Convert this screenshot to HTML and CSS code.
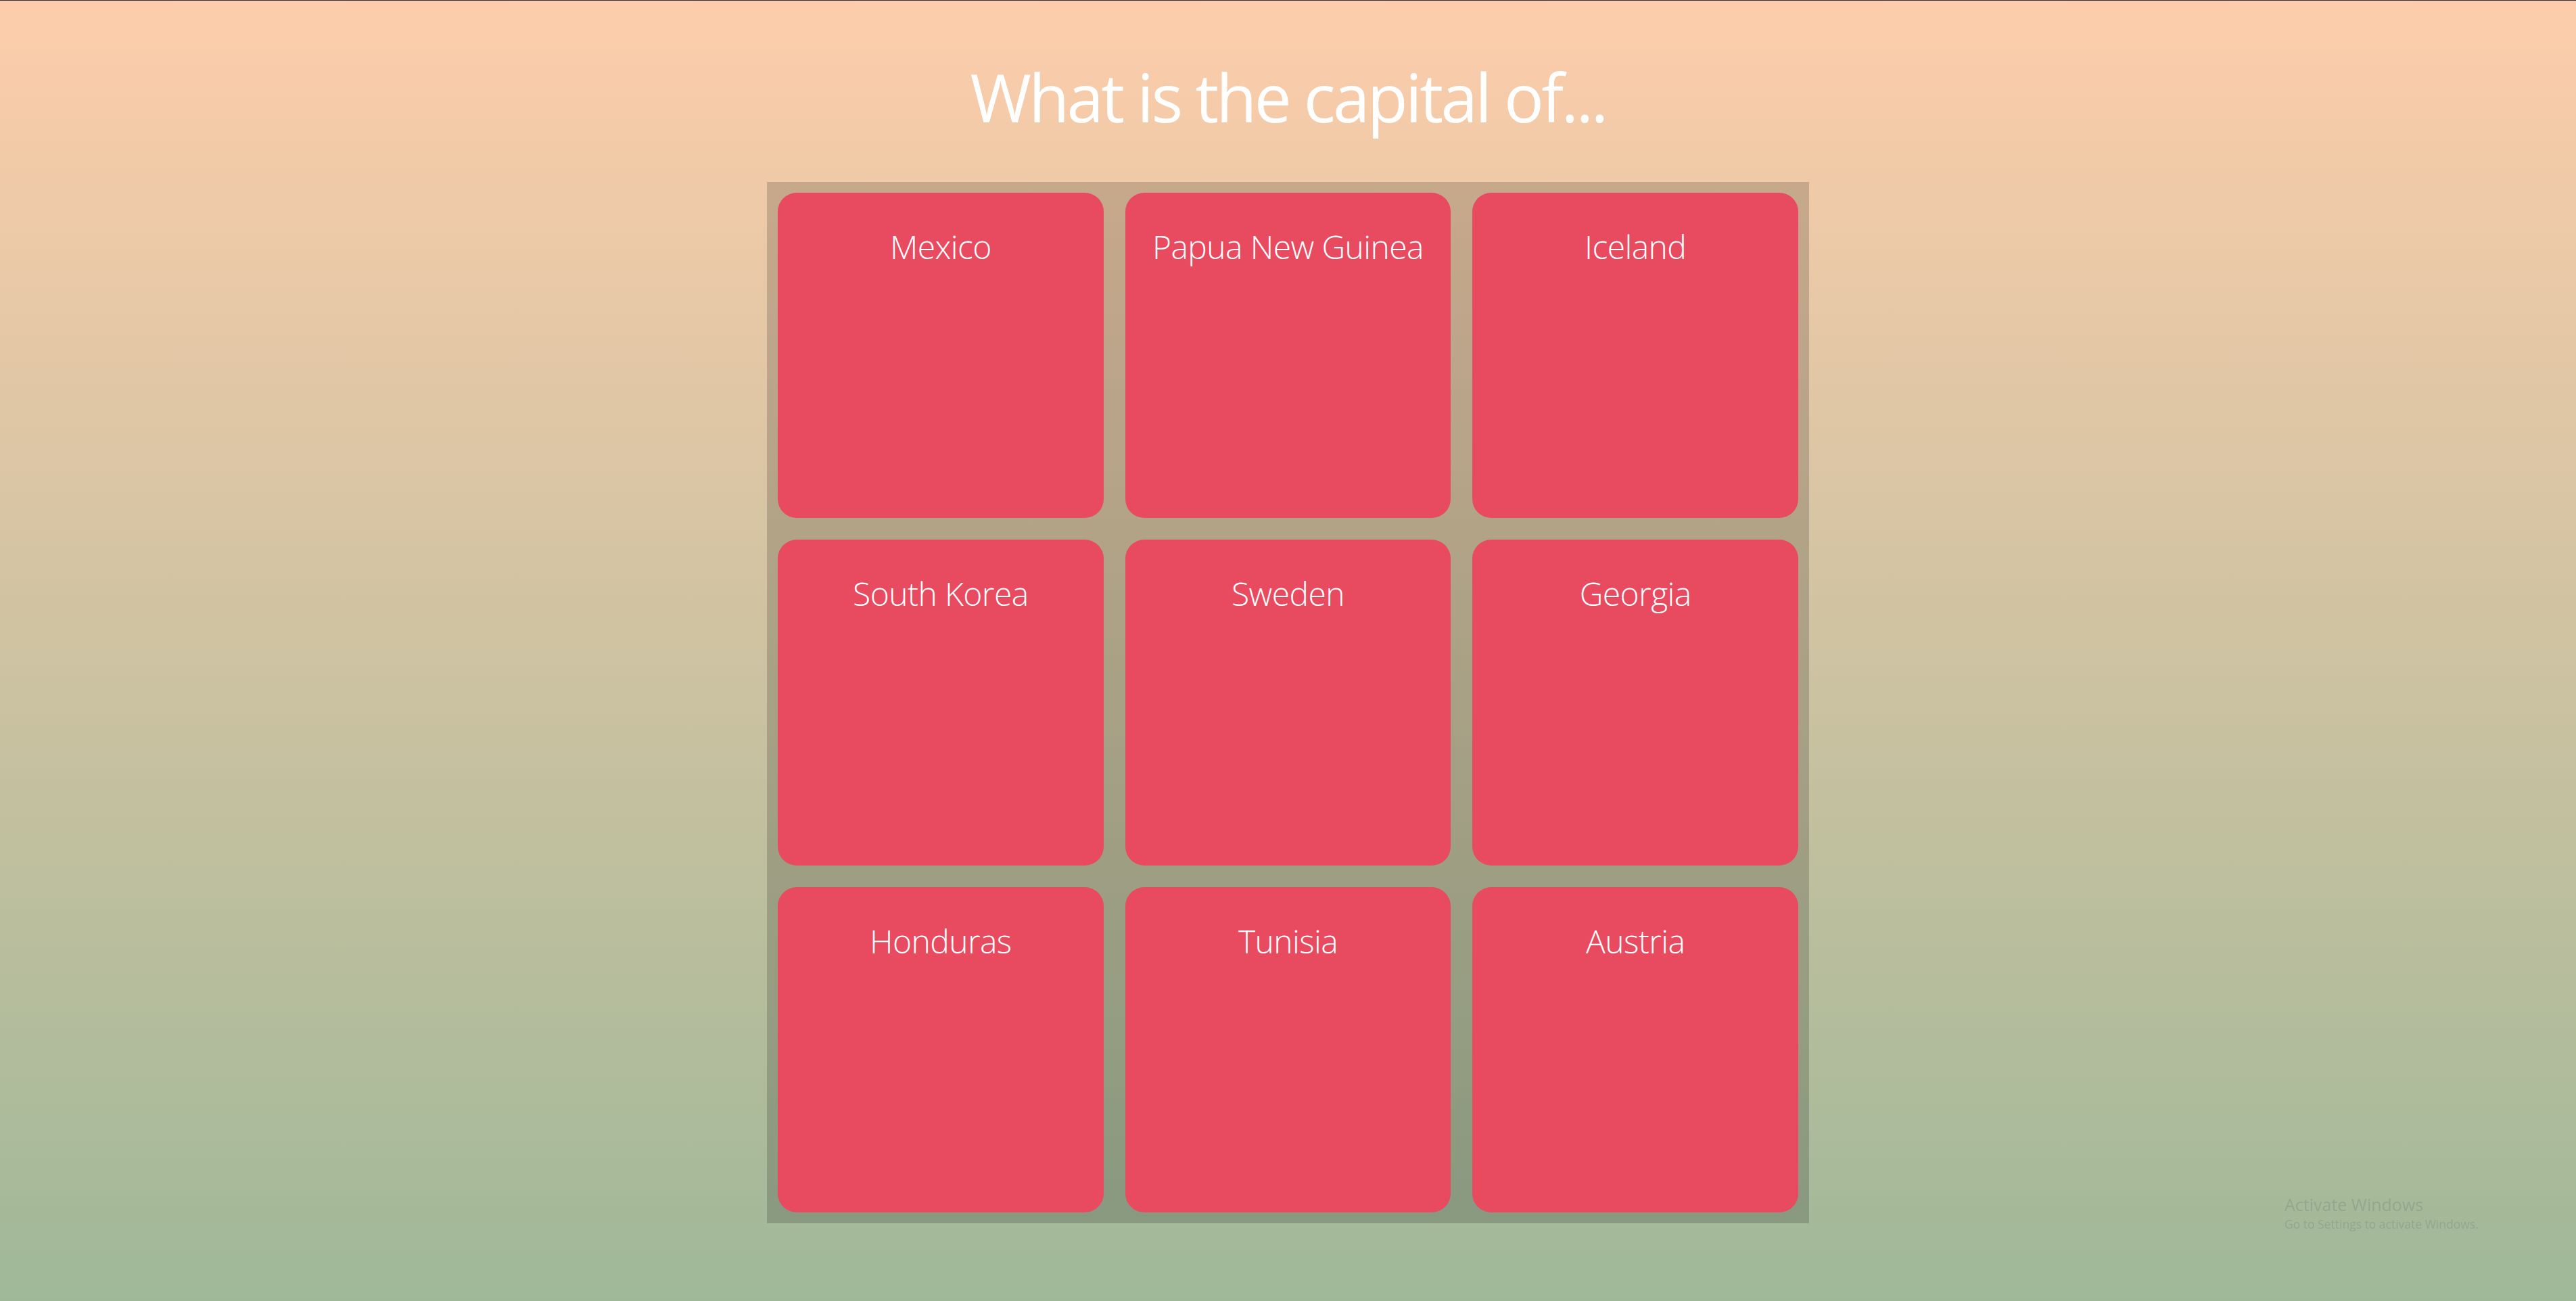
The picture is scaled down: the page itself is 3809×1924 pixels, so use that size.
FILE: index.html
```html
<!DOCTYPE html>
<html lang="en">
<head>
<meta charset="utf-8">
<title>Capitals</title>
<link rel="stylesheet" href="styles.css">
</head>
<body>
<main class="page">
  <h1 class="title">What is the capital of...</h1>
  <section class="board">
    <div class="card"><span class="card-label">Mexico</span></div>
    <div class="card"><span class="card-label">Papua New Guinea</span></div>
    <div class="card"><span class="card-label">Iceland</span></div>
    <div class="card"><span class="card-label">South Korea</span></div>
    <div class="card"><span class="card-label">Sweden</span></div>
    <div class="card"><span class="card-label">Georgia</span></div>
    <div class="card"><span class="card-label">Honduras</span></div>
    <div class="card"><span class="card-label">Tunisia</span></div>
    <div class="card"><span class="card-label">Austria</span></div>
  </section>
</main>
<div class="watermark">
  <div class="wm-title">Activate Windows</div>
  <div class="wm-sub">Go to Settings to activate Windows.</div>
</div>
</body>
</html>
```
FILE: styles.css
```css
html, body {
  margin: 0;
  padding: 0;
}
body {
  box-sizing: border-box;
  min-height: 100vh;
  border-top: 1px solid #2c303a;
  background: linear-gradient(to bottom, #fdcdab 0%, #9fb898 100%);
  font-family: "Open Sans", "Noto Sans", sans-serif;
  overflow: hidden;
}
.page {
  display: flex;
  flex-direction: column;
  align-items: center;
  padding-top: 76px;
}
.title {
  margin: 0;
  font-size: 98px;
  font-weight: 400;
  letter-spacing: -3.7px;
  color: #ffffff;
  line-height: 133.5px;
}
.board {
  margin-top: 58.5px;
  box-sizing: border-box;
  width: 1541px;
  height: 1540px;
  padding: 16px;
  display: grid;
  grid-template-columns: repeat(3, 1fr);
  grid-template-rows: repeat(3, 1fr);
  gap: 32px;
  background: rgba(0, 0, 0, 0.17);
}
.card {
  background: #e84a5f;
  border-radius: 28px;
  display: flex;
  justify-content: center;
  align-items: flex-start;
  padding-top: 47px;
}
.card-label {
  color: #ffffff;
  font-size: 48px;
  font-weight: 300;
  letter-spacing: -0.6px;
  line-height: 65px;
}
.watermark {
  position: fixed;
  left: 3378px;
  top: 1765px;
  color: rgba(120, 130, 120, 0.35);
  font-family: "Open Sans", "Noto Sans", sans-serif;
}
.wm-title {
  font-size: 25px;
  line-height: 32px;
}
.wm-sub {
  font-size: 17.5px;
  line-height: 26px;
}
```
